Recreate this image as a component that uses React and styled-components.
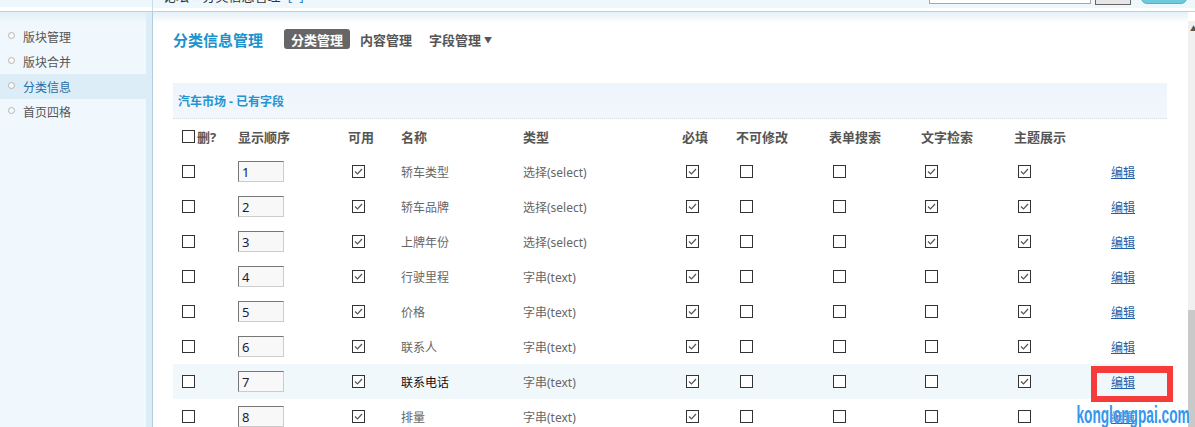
import React from "react";
import styled, { createGlobalStyle } from "styled-components";

const GlobalStyle = createGlobalStyle`
  html, body {
    margin: 0;
    padding: 0;
    background: #fff;
  }
  body {
    font-family: "Noto Sans", "Noto Sans CJK SC", sans-serif;
    font-size: 12px;
    color: #666;
  }
`;

const menu = ["版块管理", "版块合并", "分类信息", "首页四格"];

const fields = [
  { name: "轿车类型", type: "选择(select)", flags: [1, 0, 0, 1, 1] },
  { name: "轿车品牌", type: "选择(select)", flags: [1, 0, 0, 1, 1] },
  { name: "上牌年份", type: "选择(select)", flags: [1, 0, 0, 1, 1] },
  { name: "行驶里程", type: "字串(text)", flags: [1, 0, 0, 0, 1] },
  { name: "价格", type: "字串(text)", flags: [1, 0, 0, 0, 1] },
  { name: "联系人", type: "字串(text)", flags: [1, 0, 0, 0, 1] },
  { name: "联系电话", type: "字串(text)", flags: [1, 0, 0, 0, 1], active: true },
  { name: "排量", type: "字串(text)", flags: [1, 0, 0, 0, 0] },
];

const headers = ["显示顺序", "可用", "名称", "类型", "必填", "不可修改", "表单搜索", "文字检索", "主题展示", ""];

const CheckBox = ({ checked, flush }) => (
  <Box $flush={flush}>
    {checked && (
      <svg width="11" height="11" viewBox="0 0 11 11">
        <path d="M2 5.5 L4.5 8 L9 3" fill="none" stroke="#555" strokeWidth="1.2" />
      </svg>
    )}
  </Box>
);

const App = () => {
  return (
    <Page>
      <GlobalStyle />
      <TopBar>
        <TopLeft />
        <TopRight>
          <Crumbs>
            论坛 &raquo; 分类信息管理 <Plus>[+]</Plus>
          </Crumbs>
          <SearchInput />
          <SearchButton>搜索</SearchButton>
          <PillButton />
        </TopRight>
      </TopBar>

      <Body>
        <Sidebar>
          <MenuList>
            {menu.map((m, i) => (
              <MenuItem key={m} $active={i === 2}>
                <Bullet />
                {m}
              </MenuItem>
            ))}
          </MenuList>
        </Sidebar>

        <Main>
          <TitleRow>
            <Title>分类信息管理</Title>
            <Tab $active>分类管理</Tab>
            <Tab>内容管理</Tab>
            <Tab>
              字段管理<Caret>▼</Caret>
            </Tab>
          </TitleRow>

          <SectionHead>汽车市场 - 已有字段</SectionHead>

          <Table>
            <Row>
              <HeadCell>
                <CheckBox flush />
                <DelLabel>删?</DelLabel>
              </HeadCell>
              {headers.map((h, i) => (
                <HeadCell key={i}>{h}</HeadCell>
              ))}
            </Row>

            {fields.map((f, i) => (
              <Row key={f.name} $highlight={f.active}>
                <Cell>
                  <CheckBox flush />
                </Cell>
                <Cell>
                  <OrderInput defaultValue={i + 1} />
                </Cell>
                <Cell>
                  <CheckBox checked />
                </Cell>
                <Cell $dark={f.active}>{f.name}</Cell>
                <Cell>{f.type}</Cell>
                {f.flags.map((v, j) => (
                  <Cell key={j}>
                    <CheckBox checked={!!v} />
                  </Cell>
                ))}
                <Cell>
                  <EditLink href="#">编辑</EditLink>
                  {f.active && <RedMark />}
                </Cell>
              </Row>
            ))}
          </Table>

          <Watermark>konglongpai.com</Watermark>
        </Main>

        <Scrollbar>
          <ScrollArrow>▲</ScrollArrow>
          <ScrollThumb />
        </Scrollbar>
      </Body>
    </Page>
  );
};

export default App;

const Page = styled.div`
  width: 1195px;
  height: 427px;
  overflow: hidden;
  display: flex;
  flex-direction: column;
`;

const TopBar = styled.div`
  height: 11px;
  display: flex;
  border-bottom: 1px solid #bcd2db;
  background: linear-gradient(#eef8fc 0, #eef8fc 8px, #fff 8px);
  overflow: hidden;
`;

const TopLeft = styled.div`
  width: 152px;
  border-right: 1px solid #c8dde7;
  background: linear-gradient(#eef8fc 0, #eef8fc 7px, #fff 7px);
`;

const TopRight = styled.div`
  flex: 1;
  display: flex;
  align-items: flex-end;
  padding: 0 8px 0 10px;
  height: 4px;
`;

const Crumbs = styled.div`
  font-size: 13px;
  line-height: 16px;
  color: #333;
  white-space: nowrap;
  margin-bottom: 0;
`;

const Plus = styled.span`
  color: #2a7fc6;
  margin-left: 4px;
`;

const SearchInput = styled.div`
  margin-left: auto;
  width: 160px;
  height: 14px;
  border: 1px solid #a8a8a8;
  border-top: none;
  background: #fff;
`;

const SearchButton = styled.div`
  margin-left: 4px;
  width: 34px;
  height: 16px;
  margin-bottom: -1px;
  border: 1px solid #666;
  background: #e6e6e6;
  font-size: 11px;
  line-height: 10px;
  color: #222;
  text-align: center;
  overflow: hidden;
`;

const PillButton = styled.div`
  margin-left: 10px;
  width: 44px;
  height: 14px;
  border: 1px solid #4fb3c8;
  border-radius: 0 0 6px 6px;
  background: #6ccadd;
`;

const Body = styled.div`
  flex: 1;
  display: flex;
  min-height: 0;
`;

const Sidebar = styled.div`
  width: 146px;
  border-right: 6px solid #ddedf8;
  box-shadow: 1px 0 0 #b2cede;
  background: linear-gradient(#e3f0f8 0, #f0f8fd 12px);
  padding-top: 12px;
`;

const MenuList = styled.div`
  display: flex;
  flex-direction: column;
`;

const MenuItem = styled.div`
  height: 25px;
  display: flex;
  align-items: center;
  padding-left: 8px;
  font-size: 12px;
  color: ${(p) => (p.$active ? "#2a6ea6" : "#555")};
  background: ${(p) => (p.$active ? "#ddedf8" : "transparent")};
`;

const Bullet = styled.span`
  width: 5px;
  height: 5px;
  border-radius: 50%;
  border: 1px solid #b4b4b4;
  background: #fafafa;
  margin-right: 8px;
  margin-top: -2px;
`;

const Main = styled.div`
  flex: 1;
  position: relative;
  margin-left: 1px;
  padding: 0 21px 0 20px;
  background: linear-gradient(#e3f0f8 0, #fff 11px);
`;

const TitleRow = styled.div`
  display: flex;
  align-items: center;
  height: 20px;
  margin-top: 17px;
`;

const Title = styled.div`
  font-size: 15px;
  font-weight: bold;
  color: #1a92cc;
  margin-right: 21px;
`;

const Tab = styled.div`
  height: 20px;
  display: flex;
  align-items: center;
  padding: 0 7px;
  margin-right: 3px;
  border-radius: 3px;
  font-size: 13px;
  font-weight: bold;
  color: ${(p) => (p.$active ? "#fff" : "#555")};
  background: ${(p) => (p.$active ? "#666" : "transparent")};
`;

const Caret = styled.span`
  font-size: 8px;
  margin-left: 3px;
  color: #555;
`;

const SectionHead = styled.div`
  margin-top: 34px;
  height: 35px;
  display: flex;
  align-items: center;
  padding-left: 5px;
  background: linear-gradient(#edf4fc, #f2f7fd);
  border-bottom: 1px dotted #d6dde4;
  font-size: 12px;
  font-weight: bold;
  color: #2594cf;
`;

const Table = styled.div`
  display: flex;
  flex-direction: column;
`;

const Row = styled.div`
  display: grid;
  grid-template-columns: 56px 110px 53px 122px 159px 54px 93px 92px 93px 97px 65px;
  height: 35px;
  align-items: center;
  background: ${(p) => (p.$highlight ? "#f1f8fc" : "transparent")};
`;

const Cell = styled.div`
  position: relative;
  display: flex;
  align-items: center;
  padding-left: 9px;
  font-size: 12px;
  color: ${(p) => (p.$dark ? "#111" : "#666")};
  white-space: nowrap;
`;

const HeadCell = styled(Cell)`
  font-size: 13px;
  font-weight: bold;
  color: #555;
`;

const DelLabel = styled.span`
  margin-left: 2px;
`;

const Box = styled.span`
  width: 11px;
  height: 11px;
  border: 1px solid #333;
  background: #fff;
  margin-left: ${(p) => (p.$flush ? "0" : "4px")};
  display: flex;
  align-items: center;
  justify-content: center;
`;

const OrderInput = styled.input`
  box-sizing: border-box;
  width: 46px;
  height: 21px;
  margin: 0;
  padding: 0 3px;
  border: 1px solid #ccc;
  border-top-color: #777;
  border-left-color: #777;
  background: #f8f8f8;
  font-family: "Noto Sans", sans-serif;
  font-size: 13px;
  color: #1c1c3c;
  outline: none;
`;

const EditLink = styled.a`
  font-size: 12px;
  color: #2160a8;
  text-decoration: underline;
`;

const RedMark = styled.span`
  position: absolute;
  left: -11px;
  top: calc(50% - 16px);
  width: 70px;
  height: 23px;
  border: 6px solid #f63b3b;
  border-top-width: 7px;
`;

const Watermark = styled.div`
  position: absolute;
  right: -2px;
  bottom: -2px;
  font-family: "Liberation Sans", sans-serif;
  font-size: 24px;
  font-weight: bold;
  color: #3396ee;
  text-shadow: 0 0 2px #fff;
  transform: scaleX(0.57);
  transform-origin: right bottom;
  letter-spacing: 0;
`;

const Scrollbar = styled.div`
  width: 7px;
  margin-top: 9px;
  background: #f0f0f0;
  display: flex;
  flex-direction: column;
`;

const ScrollArrow = styled.div`
  font-size: 7px;
  line-height: 10px;
  color: #555;
  padding-left: 2px;
  height: 10px;
  margin-top: 3px;
  overflow: hidden;
`;

const ScrollThumb = styled.div`
  margin-top: auto;
  height: 117px;
  background: #c9c9c9;
`;
